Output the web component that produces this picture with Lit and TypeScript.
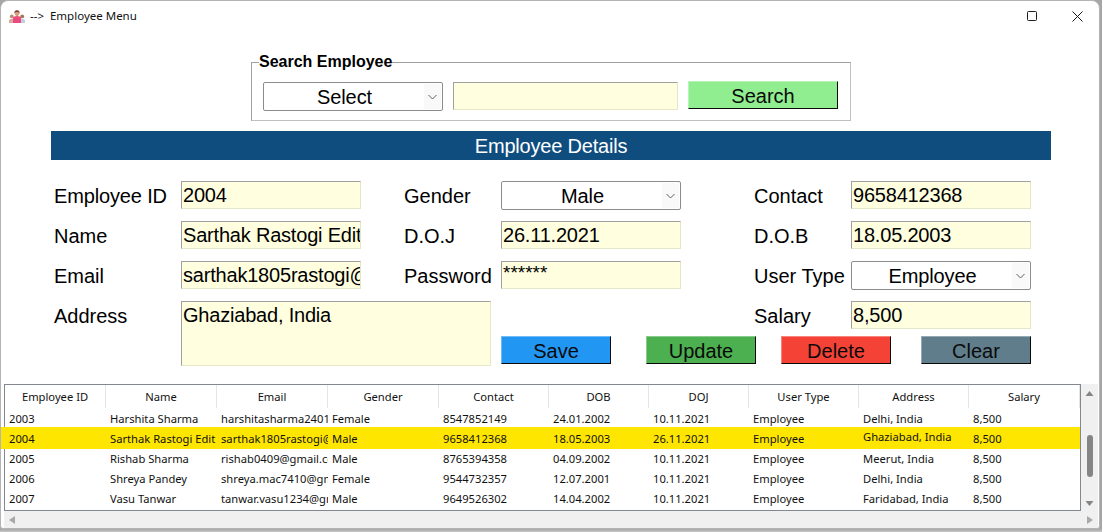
import { css, html, LitElement } from "lit";
import { customElement } from "lit/decorators.js";

interface Employee {
  id: string;
  name: string;
  email: string;
  gender: string;
  contact: string;
  dob: string;
  doj: string;
  type: string;
  address: string;
  salary: string;
  selected?: boolean;
}

const COLUMNS = [
  "Employee ID",
  "Name",
  "Email",
  "Gender",
  "Contact",
  "DOB",
  "DOJ",
  "User Type",
  "Address",
  "Salary",
];

const ROWS: Employee[] = [
  { id: "2003", name: "Harshita Sharma", email: "harshitasharma2401@gmail.com", gender: "Female", contact: "8547852149", dob: "24.01.2002", doj: "10.11.2021", type: "Employee", address: "Delhi, India", salary: "8,500" },
  { id: "2004", name: "Sarthak Rastogi Edit", email: "sarthak1805rastogi@gmail.com", gender: "Male", contact: "9658412368", dob: "18.05.2003", doj: "26.11.2021", type: "Employee", address: "Ghaziabad, India", salary: "8,500", selected: true },
  { id: "2005", name: "Rishab Sharma", email: "rishab0409@gmail.com", gender: "Male", contact: "8765394358", dob: "04.09.2002", doj: "10.11.2021", type: "Employee", address: "Meerut, India", salary: "8,500" },
  { id: "2006", name: "Shreya Pandey", email: "shreya.mac7410@gmail.com", gender: "Female", contact: "9544732357", dob: "12.07.2001", doj: "10.11.2021", type: "Employee", address: "Delhi, India", salary: "8,500" },
  { id: "2007", name: "Vasu Tanwar", email: "tanwar.vasu1234@gmail.com", gender: "Male", contact: "9649526302", dob: "14.04.2002", doj: "10.11.2021", type: "Employee", address: "Faridabad, India", salary: "8,500" },
];

const chevron = html`<svg width="9" height="6" viewBox="0 0 9 6"><path d="M0.5 1 L4.5 5 L8.5 1" fill="none" stroke="#606060" stroke-width="1"/></svg>`;

@customElement("app-root")
export class AppRoot extends LitElement {
  private combo(value: string) {
    return html`<div class="combo">
      <span class="combo__value">${value}</span>
      <span class="combo__arrow">${chevron}</span>
    </div>`;
  }

  private field(value: string) {
    return html`<div class="field">${value}</div>`;
  }

  private label(value: string, tight = false) {
    return html`<div class="label ${tight ? "label--tight" : ""}">${value}</div>`;
  }

  render() {
    return html`
      <div class="window">
        <div class="titlebar">
          <svg class="titlebar__icon" width="16" height="13" viewBox="0 0 16 13">
            <circle cx="2.8" cy="6.4" r="1.9" fill="#c08a6c" />
            <path d="M0 13 V10.5 C0 8.6 5.6 8.6 5.6 10.5 V13Z" fill="#d8a9a0" />
            <circle cx="13.2" cy="6.4" r="1.9" fill="#a87658" />
            <path d="M10.4 13 V10.5 C10.4 8.6 16 8.6 16 10.5 V13Z" fill="#c2cee0" />
            <rect x="6.8" y="4" width="2.4" height="3" fill="#d59a7a" />
            <circle cx="8" cy="2.9" r="2.5" fill="#d9a080" />
            <path d="M5.4 3 C5 -0.8 11 -0.8 10.6 3 C9.4 1.6 6.6 1.6 5.4 3Z" fill="#7a3f2a" />
            <path d="M4 13 V8.2 C4 6.4 6 6.2 8 6.2 C10 6.2 12 6.4 12 8.2 V13Z" fill="#ea4a7e" />
          </svg>
          <span class="titlebar__text">--&gt;&nbsp; Employee Menu</span>
          <div class="titlebar__controls">
            <svg width="10" height="10" viewBox="0 0 10 10"><rect x="0.5" y="0.5" width="9" height="9" rx="1" fill="none" stroke="#1a1a1a"/></svg>
            <svg width="11" height="11" viewBox="0 0 11 11"><path d="M0.5 0.5 L10.5 10.5 M10.5 0.5 L0.5 10.5" stroke="#1a1a1a" fill="none"/></svg>
          </div>
        </div>

        <div class="search">
          <fieldset class="search__box">
            <legend>Search Employee</legend>
            ${this.combo("Select")}
            <div class="field search__input"></div>
            <div class="btn search__btn">Search</div>
          </fieldset>
        </div>

        <div class="banner">Employee Details</div>

        <div class="form">
          ${this.label("Employee ID", true)} ${this.field("2004")} <span></span>
          ${this.label("Gender")} ${this.combo("Male")} <span></span>
          ${this.label("Contact")} ${this.field("9658412368")}

          ${this.label("Name")} ${this.field("Sarthak Rastogi Edit")} <span></span>
          ${this.label("D.O.J")} ${this.field("26.11.2021")} <span></span>
          ${this.label("D.O.B")} ${this.field("18.05.2003")}

          ${this.label("Email")} ${this.field("sarthak1805rastogi@gmail.com")} <span></span>
          ${this.label("Password")} <div class="field field--password">******</div> <span></span>
          ${this.label("User Type")} ${this.combo("Employee")}

          ${this.label("Address")}
          <div class="field field--area">Ghaziabad, India</div>
          <span class="form__salary-label">${this.label("Salary")}</span>
          <span class="form__salary">${this.field("8,500")}</span>

          <div class="actions">
            <div class="btn btn--save">Save</div>
            <div class="btn btn--update">Update</div>
            <div class="btn btn--delete">Delete</div>
            <div class="btn btn--clear">Clear</div>
          </div>
        </div>

        <div class="table-wrap">
          <div class="table">
            <div class="grid">
              <div class="row row--head">
                ${COLUMNS.map((c) => html`<div class="cell cell--head">${c}</div>`)}
              </div>
              ${ROWS.map(
                (r) => html`<div class="row ${r.selected ? "row--selected" : ""}">
                  <div class="cell">${r.id}</div>
                  <div class="cell">${r.name}</div>
                  <div class="cell">${r.email}</div>
                  <div class="cell">${r.gender}</div>
                  <div class="cell">${r.contact}</div>
                  <div class="cell">${r.dob}</div>
                  <div class="cell">${r.doj}</div>
                  <div class="cell">${r.type}</div>
                  <div class="cell cell--address">${r.address}</div>
                  <div class="cell">${r.salary}</div>
                </div>`
              )}
            </div>
            <div class="vscroll">
              <svg width="9" height="5" viewBox="0 0 9 5"><path d="M0.5 5 L4.5 0 L8.5 5Z" fill="#858585"/></svg>
              <div class="vscroll__thumb"></div>
              <svg width="9" height="5" viewBox="0 0 9 5"><path d="M0.5 0 L4.5 5 L8.5 0Z" fill="#858585"/></svg>
            </div>
            <div class="hscroll">
              <svg width="6" height="8" viewBox="0 0 6 8"><path d="M6 0 L0 4 L6 8Z" fill="#a8a8a8"/></svg>
              <svg width="6" height="8" viewBox="0 0 6 8"><path d="M0 0 L6 4 L0 8Z" fill="#a8a8a8"/></svg>
            </div>
          </div>
        </div>
      </div>
    `;
  }

  static styles = css`
    :host {
      display: block;
      width: 1102px;
      height: 532px;
      background: linear-gradient(#a6a6a6 0, #a6a6a6 529px, #c8c8c8 532px);
      font-family: "Liberation Sans", Arial, sans-serif;
      color: #000;
    }

    .window {
      box-sizing: border-box;
      width: 1100px;
      height: 529px;
      background: #fff;
      border: 1px solid #b4b4b4;
      border-radius: 8px 8px 3px 3px;
      overflow: hidden;
    }

    .titlebar {
      display: flex;
      align-items: center;
      height: 30px;
      padding-left: 8px;
    }

    .titlebar__icon {
      margin-right: 5px;
    }

    .titlebar__text {
      margin-top: -2px;
      font-family: "Noto Sans", sans-serif;
      font-size: 11.5px;
      color: #111;
    }

    .titlebar__controls {
      display: flex;
      align-items: center;
      gap: 35px;
      margin-left: auto;
      margin-right: 16px;
    }

    .search {
      display: flex;
      justify-content: center;
      padding-left: 2px;
      height: 91px;
    }

    .search__box {
      box-sizing: border-box;
      display: flex;
      align-items: flex-start;
      width: 600px;
      height: 68px;
      margin: 22px 0 0 0;
      padding: 11px 12px 0 11px;
      border: 1px solid #a0a0a0;
      border-bottom-color: #c0c0c0;
      border-right-color: #c0c0c0;
    }

    .search__box legend {
      padding: 0;
      margin-left: -4px;
      font-size: 16px;
      font-weight: bold;
      line-height: 18px;
    }

    .search__input {
      width: 225px;
      margin-left: 10px;
      height: 27px;
    }

    .search__btn {
      width: 150px;
      margin: -1px 0 0 10px;
      background: #90ee90;
    }

    .banner {
      margin: 9px 48px 0 50px;
      height: 29px;
      line-height: 31px;
      background: #0f4d7f;
      color: #fff;
      font-size: 20px;
      letter-spacing: -0.2px;
      text-align: center;
    }

    .form {
      display: grid;
      grid-template-columns: 127px 180px 43px 97px 180px 73px 97px 180px;
      grid-template-rows: 40px 40px 40px 35px 30px;
      align-items: start;
      margin-top: 21px;
      padding-left: 53px;
    }

    .label {
      height: 28px;
      line-height: 30px;
      font-size: 20px;
      white-space: nowrap;
    }

    .label--tight {
      letter-spacing: -0.15px;
    }

    .field {
      box-sizing: border-box;
      height: 28px;
      padding-left: 1px;
      line-height: 26px;
      font-size: 20px;
      letter-spacing: -0.2px;
      white-space: nowrap;
      overflow: hidden;
      background: #ffffe0;
      border: 1px solid #e6e6c8;
      border-top-color: #a0a0a0;
      border-left-color: #a0a0a0;
    }

    .field--password {
      line-height: 22px;
      font-size: 19px;
      letter-spacing: 0;
    }

    .field--area {
      grid-column: 2 / 5;
      grid-row: 4 / 6;
      height: 65px;
      width: 310px;
    }

    .form__salary-label {
      grid-column: 7;
      grid-row: 4;
    }

    .form__salary {
      grid-column: 8;
      grid-row: 4;
    }

    .combo {
      box-sizing: border-box;
      position: relative;
      display: flex;
      align-items: center;
      justify-content: center;
      width: 180px;
      height: 29px;
      background: #fff;
      border: 1px solid #8c8c8c;
      border-radius: 2px;
      font-size: 20px;
      letter-spacing: -0.1px;
      padding: 2px 17px 0 0;
      flex: none;
    }

    .combo__arrow {
      position: absolute;
      top: 1px;
      right: 1px;
      bottom: 1px;
      width: 17px;
      display: flex;
      align-items: center;
      justify-content: center;
      background: #f9f9f9;
    }

    .btn {
      box-sizing: border-box;
      height: 28px;
      line-height: 28px;
      text-align: center;
      font-size: 20px;
      color: #0a0a0a;
      border-style: solid;
      border-width: 1px;
      border-color: rgba(255, 255, 255, 0.35) #0a0a0a #0a0a0a rgba(255, 255, 255, 0.35);
      flex: none;
    }

    .actions {
      grid-column: 5 / 9;
      grid-row: 5;
      display: flex;
    }

    .actions .btn {
      width: 110px;
    }

    .btn--save {
      background: #2196f3;
    }

    .btn--update {
      background: #4caf50;
      margin-left: 35px;
    }

    .btn--delete {
      background: #f44336;
      margin-left: 25px;
    }

    .btn--clear {
      background: #607d8b;
      margin-left: 30px;
    }

    .table-wrap {
      margin: 18px 0 0 3px;
    }

    .table {
      display: grid;
      grid-template-columns: 1077px 17px;
      grid-template-rows: 127px 17px;
      width: 1094px;
      font-family: "Noto Sans", sans-serif;
      font-size: 11.2px;
      color: #111;
    }

    .grid {
      box-sizing: border-box;
      border: 1px solid #828790;
    }

    .row {
      display: grid;
      grid-template-columns: 101px 111px 111px 111px 110px 100px 100px 110px 110px 111px;
      height: 20px;
      line-height: 20px;
    }

    .row--head {
      height: 24px;
      line-height: 23px;
    }

    .row--selected {
      box-sizing: border-box;
      height: 22px;
      margin: -2px 0 0 -4px;
      padding: 2px 0 0 4px;
      background: #ffe600;
    }

    .row--selected .cell--address {
      margin-top: -2px;
    }

    .cell {
      padding: 0 3px 0 4px;
      overflow: hidden;
      white-space: nowrap;
    }

    .cell--head {
      height: 23px;
      padding: 0;
      text-align: center;
      border-right: 1px solid #e5e5e5;
    }

    .vscroll {
      box-sizing: border-box;
      display: flex;
      flex-direction: column;
      align-items: center;
      justify-content: space-between;
      padding: 7px 0 5px;
      background: #f0f0f0;
    }

    .vscroll__thumb {
      width: 6px;
      height: 42px;
      margin-top: 39px;
      margin-bottom: auto;
      border-radius: 3px;
      background: #858585;
    }

    .hscroll {
      grid-column: 1 / 3;
      display: flex;
      align-items: center;
      justify-content: space-between;
      padding: 0 5px;
      background: #f0f0f0;
    }
  `;
}
